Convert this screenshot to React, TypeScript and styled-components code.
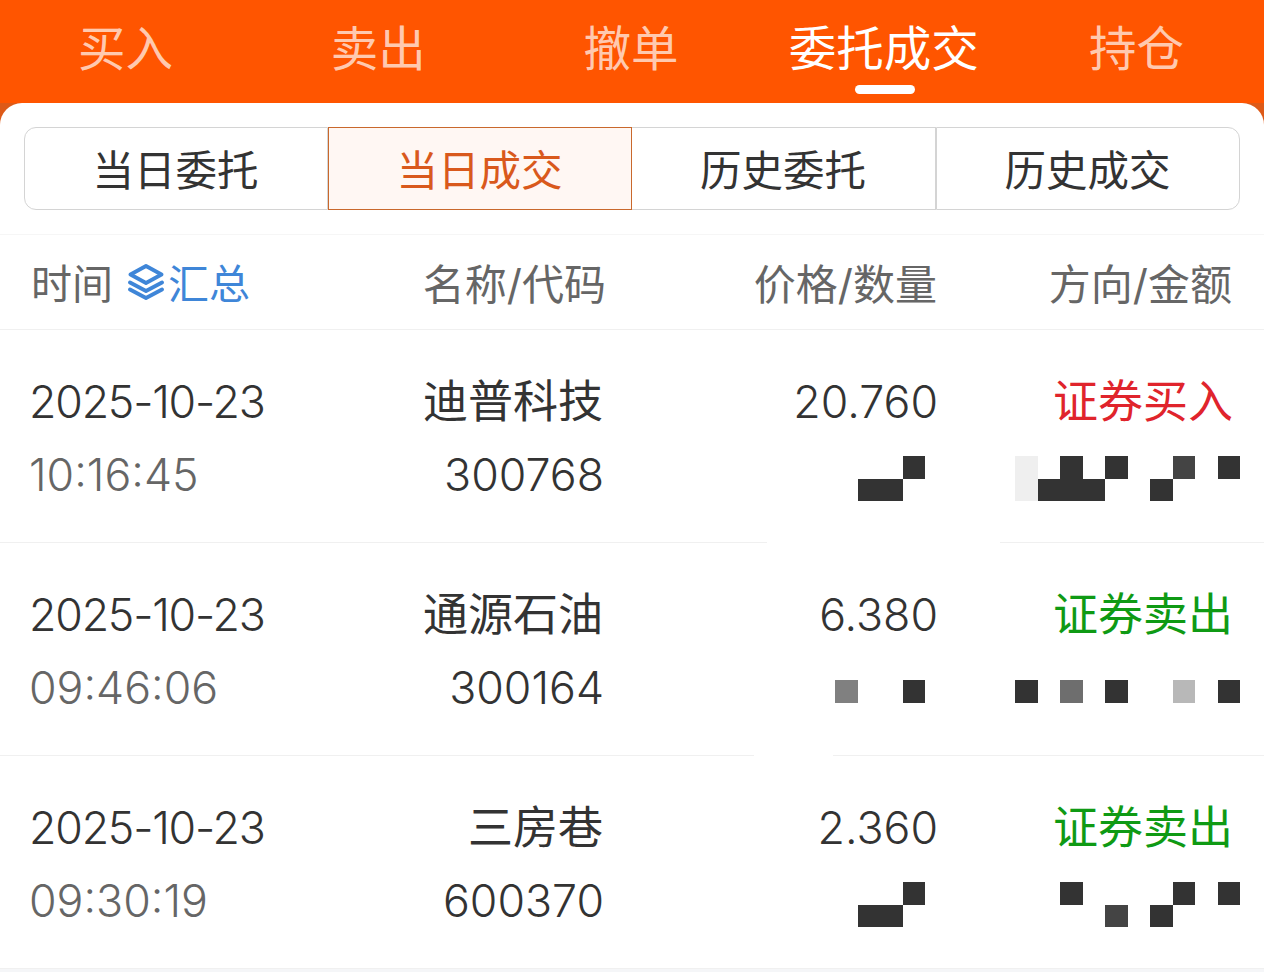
import styled, { createGlobalStyle } from 'styled-components';

const GlobalStyle = createGlobalStyle`
	html, body {
		margin: 0;
		padding: 0;
		background: #f5f6f8;
	}

	body {
		font-family: Inter, "Noto Sans CJK SC", sans-serif;
		overflow: hidden;
	}
`;

const Page = styled.div`
	width: 1264px;
	height: 972px;
	background: linear-gradient(#ff5500 0 103px, #dd5a18 103px 130px, #f5f6f8 130px);
`;

const TopTabs = styled.nav`
	display: grid;
	grid-template-columns: repeat(5, 1fr);
	height: 103px;
`;

const TopTab = styled.div<{ $active?: boolean }>`
	position: relative;
	height: 97px;
	padding-right: 2px;
	line-height: 98px;
	text-align: center;
	font-size: 47.5px;
	color: ${(p) => (p.$active ? '#fff' : 'rgba(255, 255, 255, 0.7)')};

	&::after {
		content: '';
		display: ${(p) => (p.$active ? 'block' : 'none')};
		position: absolute;
		left: 50%;
		bottom: 3px;
		width: 60px;
		height: 9px;
		margin-left: -30px;
		border-radius: 5px;
		background: #fff;
	}
`;

const Panel = styled.main`
	height: 865px;
	background: #fff;
	border-radius: 22px 22px 0 0;
`;

const SubTabs = styled.div`
	display: grid;
	grid-template-columns: repeat(4, 1fr);
	height: 83px;
	margin: 0 24px;
	padding-top: 24px;
`;

const SubTab = styled.div<{ $active?: boolean }>`
	box-sizing: border-box;
	height: 83px;
	padding: 5px 1px 0 0;
	line-height: 76px;
	text-align: center;
	font-size: 41.5px;
	color: ${(p) => (p.$active ? '#d9591c' : '#333')};
	background: ${(p) => (p.$active ? '#fff7f3' : '#fff')};
	border: 1px solid ${(p) => (p.$active ? '#c9682c' : '#d4d4d4')};
	border-left-width: ${(p) => (p.$active ? 1 : 0)}px;

	&:first-child {
		border-left-width: 1px;
		border-radius: 12px 0 0 12px;
	}

	&:last-child {
		border-left-width: 1px;
		border-radius: 0 12px 12px 0;
	}
`;

const TableHead = styled.div`
	display: grid;
	grid-template-columns: 242px 333px 334px 295px;
	align-items: center;
	height: 92px;
	margin-top: 24px;
	padding-left: 29px;
	padding-bottom: 2px;
	border-top: 1px solid #f6f6f6;
	border-bottom: 1px solid #f0f0f0;
	font-size: 42px;
	color: #666;
`;

const HeadCell = styled.div<{ $inset?: number }>`
	display: flex;
	align-items: center;
	justify-content: flex-end;
	margin-right: ${(p) => p.$inset || 0}px;
	white-space: nowrap;
`;

const TimeHead = styled.div`
	display: flex;
	align-items: center;
	padding-left: 2px;
	font-size: 41px;
	white-space: nowrap;
`;

const SummaryLink = styled.span`
	display: inline-flex;
	align-items: center;
	gap: 4px;
	margin-left: 15px;
	color: #3f86d8;

	svg {
		margin-top: 2px;
	}
`;

const TradeRow = styled.div`
	display: grid;
	grid-template-columns: 242px 333px 334px 295px;
	height: 212px;
	padding-left: 29px;
	box-sizing: border-box;
	padding-top: 35px;
`;

const Divider = styled.div<{ $from: number; $to: number }>`
	height: 1px;
	background: linear-gradient(
		to right,
		#f0f0f0 ${(p) => p.$from}px,
		#fff ${(p) => p.$from}px,
		#fff ${(p) => p.$to}px,
		#f0f0f0 ${(p) => p.$to}px
	);
`;

const Column = styled.div<{ $left?: boolean }>`
	display: flex;
	flex-direction: column;
	align-items: ${(p) => (p.$left ? 'flex-start' : 'flex-end')};
`;

const Line = styled.div<{ $color?: string; $inset?: number }>`
	height: 73px;
	line-height: 74px;
	margin-right: ${(p) => p.$inset || 0}px;
	font-size: 45px;
	white-space: nowrap;
	color: ${(p) => p.$color || '#333'};
`;

const NumberLine = styled(Line)<{ $tight?: boolean }>`
	line-height: 75px;
	font-size: 44.7px;
	font-weight: 350;
	letter-spacing: ${(p) => (p.$tight ? '-1.2px' : '0')};
`;

const MosaicLine = styled.div<{ $inset: number }>`
	display: flex;
	align-items: center;
	height: 73px;
	padding-top: 4px;
	margin-right: ${(p) => p.$inset}px;
`;

const Mosaic = styled.div<{ $cols: number }>`
	display: grid;
	grid-template-columns: repeat(${(p) => p.$cols}, 22.5px);
	grid-auto-rows: 22.5px;
`;

const MosaicCell = styled.div<{ $tone: string }>`
	background: ${(p) => p.$tone};
`;

const tones: Record<string, string> = {
	'.': 'transparent',
	d: '#333',
	m: '#444',
	g: '#808080',
	h: '#6e6e6e',
	s: '#b8b8b8',
	l: '#efefef',
};

const Pixelated = ({ rows, inset }: { rows: string[]; inset: number }) => (
	<MosaicLine $inset={inset}>
		<Mosaic $cols={rows[0].length}>
			{rows.join('').split('').map((tone, i) => (
				<MosaicCell key={i} $tone={tones[tone]} />
			))}
		</Mosaic>
	</MosaicLine>
);

const LayersIcon = () => (
	<svg width="36" height="36" viewBox="0 0 36 36" fill="none" stroke="#3f86d8" strokeWidth="3.8" strokeLinejoin="round" strokeLinecap="round">
		<path d="M18 2 33.500 10.500 18 19 2.500 10.500Z" />
		<path d="M2 18.500 18 27 34 18.500" />
		<path d="M2 25.500 18 34 34 25.500" />
	</svg>
);

const RED = '#e0242c';
const GREEN = '#0f9a14';

const trades = [
	{
		date: '2025-10-23',
		time: '10:16:45',
		name: '迪普科技',
		code: '300768',
		price: '20.760',
		side: '证券买入',
		color: RED,
		qty: ['...d', '.dd.'],
		amount: ['l.d.d..m.d', 'lddd..d...'],
		gap: [767, 1000],
	},
	{
		date: '2025-10-23',
		time: '09:46:06',
		name: '通源石油',
		code: '300164',
		price: '6.380',
		side: '证券卖出',
		color: GREEN,
		qty: ['g..d'],
		amount: ['d.h.d..s.d'],
		gap: [754, 833],
	},
	{
		date: '2025-10-23',
		time: '09:30:19',
		name: '三房巷',
		code: '600370',
		price: '2.360',
		side: '证券卖出',
		color: GREEN,
		qty: ['...d', '.dd.'],
		amount: ['..d....d.d', '....m.d...'],
		gap: [0, 0],
	},
];

const App = () => {
	return (
		<Page>
			<GlobalStyle />
			<TopTabs>
				<TopTab>买入</TopTab>
				<TopTab>卖出</TopTab>
				<TopTab>撤单</TopTab>
				<TopTab $active>委托成交</TopTab>
				<TopTab>持仓</TopTab>
			</TopTabs>
			<Panel>
				<SubTabs>
					<SubTab>当日委托</SubTab>
					<SubTab $active>当日成交</SubTab>
					<SubTab>历史委托</SubTab>
					<SubTab>历史成交</SubTab>
				</SubTabs>
				<TableHead>
					<TimeHead>
						时间
						<SummaryLink>
							<LayersIcon />
							汇总
						</SummaryLink>
					</TimeHead>
					<HeadCell $inset={-2}>名称/代码</HeadCell>
					<HeadCell $inset={1}>价格/数量</HeadCell>
					<HeadCell $inset={1}>方向/金额</HeadCell>
				</TableHead>
				{trades.map((t) => (
					<div key={t.code}>
						<TradeRow>
							<Column $left>
								<NumberLine $tight>{t.date}</NumberLine>
								<NumberLine $color="#666">{t.time}</NumberLine>
							</Column>
							<Column>
								<Line $inset={1}>{t.name}</Line>
								<NumberLine>{t.code}</NumberLine>
							</Column>
							<Column>
								<NumberLine>{t.price}</NumberLine>
								<Pixelated rows={t.qty} inset={13} />
							</Column>
							<Column>
								<Line $color={t.color}>{t.side}</Line>
								<Pixelated rows={t.amount} inset={-7} />
							</Column>
						</TradeRow>
						<Divider $from={t.gap[0]} $to={t.gap[1]} />
					</div>
				))}
			</Panel>
		</Page>
	);
};

export default App;
